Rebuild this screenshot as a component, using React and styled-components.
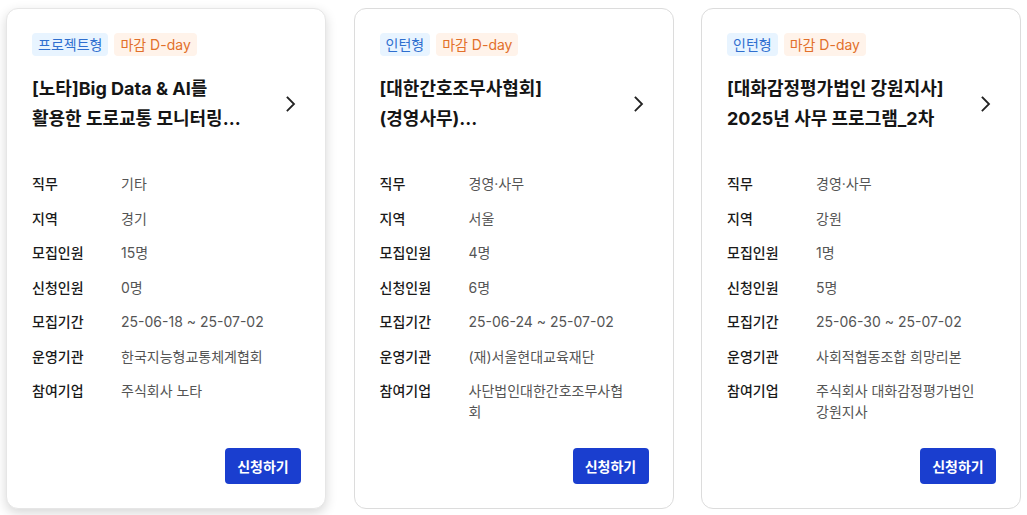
import React from "react";
import styled, { createGlobalStyle } from "styled-components";

const Global = createGlobalStyle`
  html, body { margin: 0; padding: 0; background: #ffffff; }
  body { font-family: Inter, "Noto Sans CJK KR", sans-serif; -webkit-font-smoothing: antialiased; }
  * { box-sizing: border-box; }
`;

const Row3 = styled.div`
  display: flex;
  gap: 27.5px;
  padding: 8px 6px;
`;

const Card = styled.article`
  width: 320px;
  height: 501px;
  flex: none;
  display: flex;
  flex-direction: column;
  padding: 24px 24px 24px 25px;
  background: #fff;
  border: 1px solid ${(p) => (p.$active ? "#e6e6e6" : "#dcdcdc")};
  border-radius: 12px;
  box-shadow: ${(p) => (p.$active ? "0 4px 12px rgba(0,0,0,0.16)" : "none")};
`;

const Badges = styled.div`
  display: flex;
  gap: 6px;
`;

const Badge = styled.span`
  display: inline-flex;
  align-items: center;
  height: 23px;
  padding: 0 6px;
  border-radius: 4px;
  font-size: 14px;
  line-height: 1;
  background: ${(p) => (p.$tone === "orange" ? "#fff3ea" : "#e8f4ff")};
  color: ${(p) => (p.$tone === "orange" ? "#e2702a" : "#2f6fcf")};
`;

const TitleRow = styled.div`
  display: flex;
  align-items: center;
  justify-content: space-between;
  margin-top: 18px;
`;

const Title = styled.h3`
  margin: 0;
  width: 222px;
  font-size: 18px;
  line-height: 30px;
  font-weight: 700;
  color: #151515;
  word-break: keep-all;
`;

const Chevron = styled.svg`
  width: 10px;
  height: 16px;
  margin-right: 5px;
  flex: none;
`;

const Info = styled.dl`
  margin: 39px 0 0;
  display: flex;
  flex-direction: column;
  gap: 13.5px;
`;

const InfoRow = styled.div`
  display: grid;
  grid-template-columns: 89px 162px;
  font-size: 14px;
  line-height: 21px;
`;

const Label = styled.dt`
  margin: 0;
  color: #1a1a1a;
  font-weight: 500;
`;

const Value = styled.dd`
  margin: 0;
  color: #555;
  word-break: break-all;
`;

const Footer = styled.div`
  margin-top: auto;
  display: flex;
  justify-content: flex-end;
`;

const ApplyButton = styled.button`
  width: 76px;
  height: 36px;
  border: none;
  border-radius: 4px;
  background: #1a3ecf;
  color: #fff;
  font-family: inherit;
  font-size: 14px;
  font-weight: 700;
  cursor: pointer;
`;

const cards = [
  {
    type: "프로젝트형",
    title: "[노타]Big Data & AI를 활용한 도로교통 모니터링...",
    active: true,
    rows: [
      ["직무", "기타"],
      ["지역", "경기"],
      ["모집인원", "15명"],
      ["신청인원", "0명"],
      ["모집기간", "25-06-18 ~ 25-07-02"],
      ["운영기관", "한국지능형교통체계협회"],
      ["참여기업", "주식회사 노타"],
    ],
  },
  {
    type: "인턴형",
    title: "[대한간호조무사협회] (경영사무)...",
    rows: [
      ["직무", "경영·사무"],
      ["지역", "서울"],
      ["모집인원", "4명"],
      ["신청인원", "6명"],
      ["모집기간", "25-06-24 ~ 25-07-02"],
      ["운영기관", "(재)서울현대교육재단"],
      ["참여기업", "사단법인대한간호조무사협회"],
    ],
  },
  {
    type: "인턴형",
    title: "[대화감정평가법인 강원지사] 2025년 사무 프로그램_2차",
    rows: [
      ["직무", "경영·사무"],
      ["지역", "강원"],
      ["모집인원", "1명"],
      ["신청인원", "5명"],
      ["모집기간", "25-06-30 ~ 25-07-02"],
      ["운영기관", "사회적협동조합 희망리본"],
      ["참여기업", "주식회사 대화감정평가법인 강원지사"],
    ],
  },
];

export default function App() {
  return (
    <>
      <Global />
      <Row3>
        {cards.map((c, i) => (
          <Card key={i} $active={c.active}>
            <Badges>
              <Badge>{c.type}</Badge>
              <Badge $tone="orange">마감 D-day</Badge>
            </Badges>
            <TitleRow>
              <Title>{c.title}</Title>
              <Chevron viewBox="0 0 10 16" fill="none">
                <path d="M1.5 1.5 L8 8 L1.5 14.5" stroke="#222" strokeWidth="1.8" strokeLinecap="square" />
              </Chevron>
            </TitleRow>
            <Info>
              {c.rows.map(([k, v]) => (
                <InfoRow key={k}>
                  <Label>{k}</Label>
                  <Value>{v}</Value>
                </InfoRow>
              ))}
            </Info>
            <Footer>
              <ApplyButton>신청하기</ApplyButton>
            </Footer>
          </Card>
        ))}
      </Row3>
    </>
  );
}
